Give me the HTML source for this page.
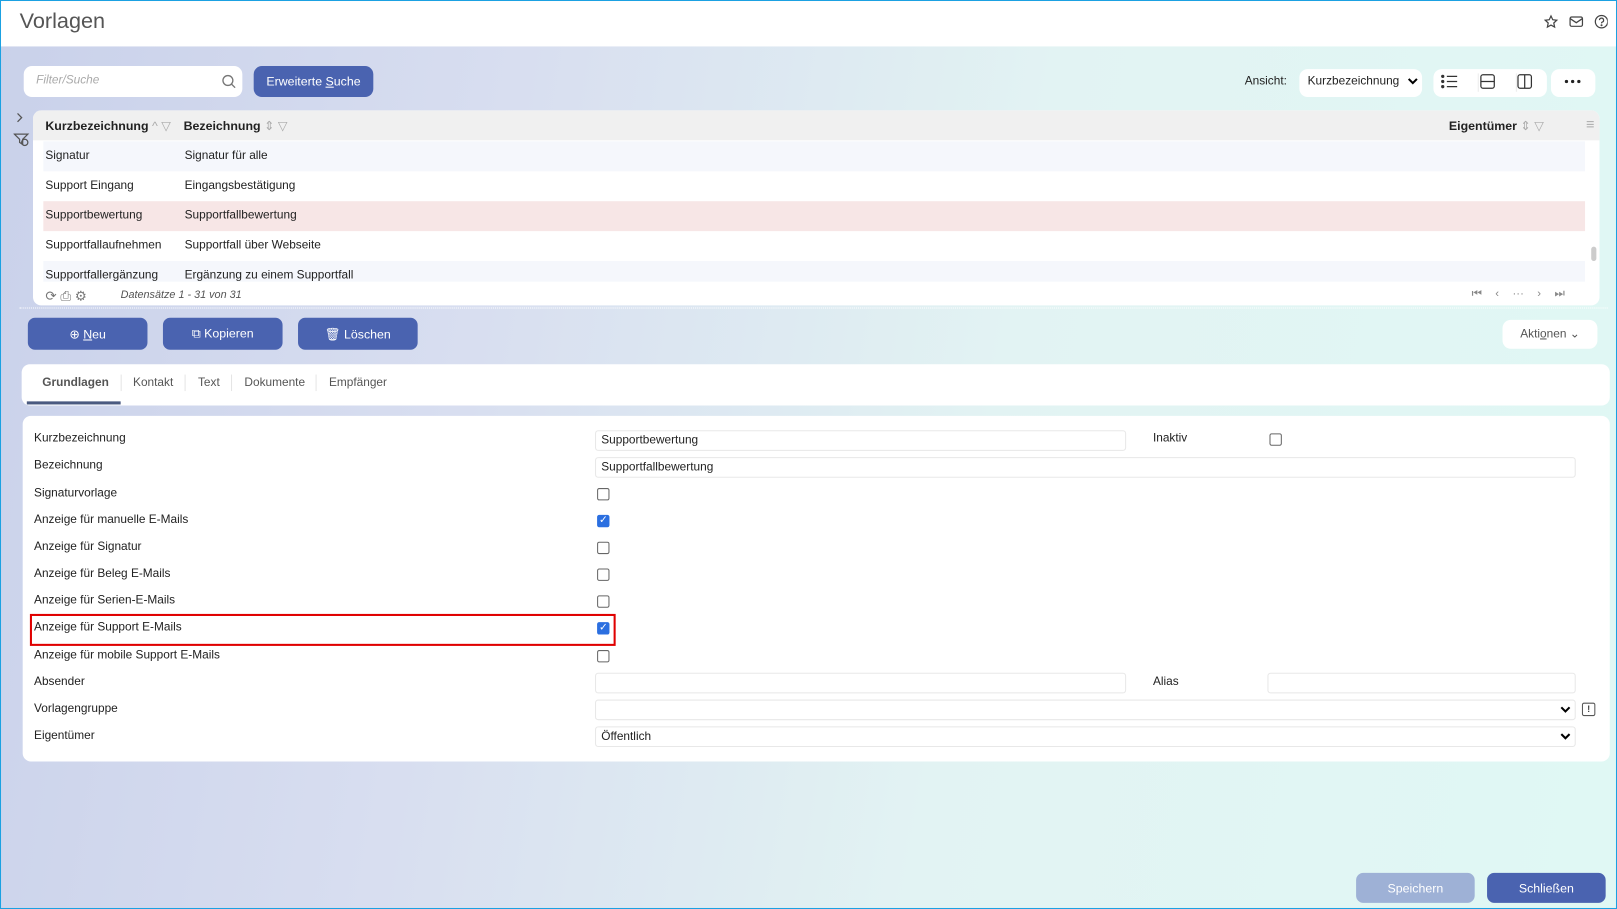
<!DOCTYPE html>
<html><head><meta charset="utf-8"><style>
*{box-sizing:border-box;margin:0;padding:0}
html,body{width:1617px;height:909px;overflow:hidden;background:#fff}
#w{position:absolute;left:0;top:0;width:1568px;height:881px;transform:scale(1.03125,1.0318);transform-origin:0 0;font-family:"Liberation Sans",sans-serif;font-size:11.5px;color:#222;
background:linear-gradient(100deg,#c9d1ea 0%,#d8def0 30%,#e2f3f3 60%,#e0f8f4 100%);border:1.5px solid #1ba1e2;overflow:hidden}
.a{position:absolute}
.top{left:0;top:0;width:100%;height:44px;background:#fff}
.card{background:#fff;border-radius:8px}
.btn{background:#4a63b0;color:#fff;border-radius:7px;display:flex;align-items:center;justify-content:center;font-size:12px}
.row{left:10px;width:1495px;height:29px;line-height:29px}
.row span{position:absolute}
.lbl{left:32px;font-size:11.5px}
.inp{border:1px solid #e8e8e8;border-radius:3px;height:20px;line-height:18px;padding-left:5px;font-size:11.5px;background:#fff}
.cb{width:12px;height:12px;border:1px solid #666;border-radius:2px;background:#fff}
.cbc{width:12px;height:12px;border-radius:2px;background:#2b6fe0;color:#fff;font-size:10px;line-height:12px;text-align:center}
.tab{top:364px;font-size:11.5px;color:#555}
</style></head><body><div id="w">
<div class="a top"></div>
<div class="a" style="left:18px;top:8px;font-size:21px;color:#555">Vorlagen</div>
<svg class="a" style="left:1496px;top:13px" width="62" height="16" fill="none" stroke="#444" stroke-width="1.2">
<path d="M7 1.5l1.7 3.6 3.9.5-2.9 2.7.8 3.9L7 10.3l-3.5 1.9.8-3.9L1.4 5.6l3.9-.5z"/>
<rect x="25.5" y="2.5" width="12" height="9" rx="1.5"/><path d="M25.5 4l6 4 6-4"/>
<circle cx="56" cy="7" r="6"/><path d="M54 5.5a2 2 0 1 1 2.5 2c-.4.2-.5.6-.5 1.2"/><circle cx="56" cy="10.5" r=".4" fill="#444"/></svg>

<div class="a card" style="left:22px;top:63px;width:212px;height:30px;border-radius:8px"></div>
<div class="a" style="left:34px;top:71px;color:#aaa;font-style:italic">Filter/Suche</div>
<svg class="a" style="left:214px;top:71px" width="14" height="14" fill="none" stroke="#777" stroke-width="1.3"><circle cx="6" cy="6" r="4.8"/><path d="M9.5 9.5l3.5 3.5"/></svg>
<div class="a btn" style="left:245px;top:63px;width:116px;height:30px;border-radius:8px">Erweiterte&nbsp;<u>S</u>uche</div>

<div class="a" style="left:1206px;top:72px">Ansicht:</div>
<div class="a card" style="left:1259px;top:66px;width:119px;height:27px"></div>
<div class="a" style="left:1267px;top:72px">Kurzbezeichnung</div>
<svg class="a" style="left:1364px;top:74px" width="10" height="8" fill="none" stroke="#000" stroke-width="2"><path d="M1 1.5l4 4 4-4"/></svg>
<div class="a card" style="left:1389px;top:66px;width:110px;height:27px"></div>
<svg class="a" style="left:1396px;top:70px" width="96" height="18" fill="none" stroke="#333" stroke-width="1.2">
<path d="M6 3h10M6 8h10M6 13h10"/><circle cx="2" cy="3" r="1" fill="#333"/><circle cx="2" cy="8" r="1" fill="#333"/><circle cx="2" cy="13" r="1" fill="#333"/>
<path d="M36.5 0v18M73.5 0v18" stroke="#eee"/>
<rect x="39" y="1.5" width="13" height="13" rx="2"/><path d="M39 8h13"/>
<rect x="75" y="1.5" width="13" height="13" rx="2"/><path d="M81.5 1.5v13"/></svg>
<div class="a card" style="left:1503px;top:66px;width:43px;height:27px"></div>
<svg class="a" style="left:1516px;top:76px" width="16" height="4" fill="#222"><circle cx="2" cy="2" r="1.6"/><circle cx="8" cy="2" r="1.6"/><circle cx="14" cy="2" r="1.6"/></svg>

<svg class="a" style="left:12px;top:107px" width="16" height="36" fill="none" stroke="#555" stroke-width="1.2"><path d="M4 2l4 4-4 4"/><path d="M1 22h13l-5 5v5l-3-2v-3z"/><circle cx="11" cy="30" r="3"/></svg>

<div class="a card" style="left:31px;top:106px;width:1519px;height:189px;overflow:hidden">
<div class="a" style="left:0;top:0;width:100%;height:29px;background:#f0f0f0"></div>
<div class="a" style="left:12px;top:8px;font-weight:bold;font-size:12px">Kurzbezeichnung <span style="color:#aaa;font-weight:normal">^ ▽</span></div>
<div class="a" style="left:146px;top:8px;font-weight:bold;font-size:12px">Bezeichnung <span style="color:#aaa;font-weight:normal">⇕ ▽</span></div>
<div class="a" style="left:1373px;top:8px;font-weight:bold;font-size:12px">Eigentümer <span style="color:#aaa;font-weight:normal">⇕ ▽</span></div>
<div class="a" style="left:1506px;top:5px;color:#aaa;font-size:14px">≡</div>
<div class="a row" style="top:30px;background:#f5f7fc"><span style="left:2px">Signatur</span><span style="left:137px">Signatur für alle</span></div>
<div class="a row" style="top:59px"><span style="left:2px">Support Eingang</span><span style="left:137px">Eingangsbestätigung</span></div>
<div class="a row" style="top:88px;background:#f7e6e6"><span style="left:2px">Supportbewertung</span><span style="left:137px">Supportfallbewertung</span></div>
<div class="a row" style="top:117px"><span style="left:2px">Supportfallaufnehmen</span><span style="left:137px">Supportfall über Webseite</span></div>
<div class="a row" style="top:146px;height:20px;background:#f5f7fc;overflow:hidden"><span style="left:2px">Supportfallergänzung</span><span style="left:137px">Ergänzung zu einem Supportfall</span></div>
<div class="a" style="left:1511px;top:132px;width:5px;height:14px;background:#ccc;border-radius:3px"></div>
<div class="a" style="left:12px;top:172px;color:#777;font-size:13px">⟳ ⎙ ⚙</div>
<div class="a" style="left:85px;top:173px;color:#555;font-style:italic;font-size:10.5px">Datensätze 1 - 31 von 31</div>
<div class="a" style="left:1395px;top:172px;color:#888;font-size:11px;word-spacing:10px">⏮ ‹ ··· › ⏭</div>
</div>
<div class="a" style="left:18px;top:297px;width:1540px;border-top:1px dotted #fff"></div>

<div class="a btn" style="left:26px;top:307px;width:116px;height:31px">⊕&nbsp;<u>N</u>eu</div>
<div class="a btn" style="left:157px;top:307px;width:116px;height:31px">⧉&nbsp;Kopieren</div>
<div class="a btn" style="left:288px;top:307px;width:116px;height:31px">🗑&nbsp;Löschen</div>
<div class="a card" style="left:1456px;top:309px;width:92px;height:28px;color:#555;text-align:center;line-height:28px">Akti<u>o</u>nen ⌄</div>

<div class="a card" style="left:20px;top:352px;width:1540px;height:40px"></div>
<div class="a tab" style="left:40px;font-weight:bold">Grundlagen</div>
<div class="a" style="left:25px;top:388px;width:91px;height:3px;background:#4a5a80"></div>
<div class="a tab" style="left:128px">Kontakt</div>
<div class="a tab" style="left:191px">Text</div>
<div class="a tab" style="left:236px">Dokumente</div>
<div class="a tab" style="left:318px">Empfänger</div>
<div class="a" style="left:116px;top:362px;height:16px;border-left:1px solid #e5e5e5"></div>
<div class="a" style="left:178px;top:362px;height:16px;border-left:1px solid #e5e5e5"></div>
<div class="a" style="left:223px;top:362px;height:16px;border-left:1px solid #e5e5e5"></div>
<div class="a" style="left:305px;top:362px;height:16px;border-left:1px solid #e5e5e5"></div>

<div class="a card" style="left:21px;top:402px;width:1539px;height:335px"></div>
<div class="a lbl" style="top:418px">Kurzbezeichnung</div>
<div class="a lbl" style="top:444px">Bezeichnung</div>
<div class="a lbl" style="top:471px">Signaturvorlage</div>
<div class="a lbl" style="top:497px">Anzeige für manuelle E-Mails</div>
<div class="a lbl" style="top:523px">Anzeige für Signatur</div>
<div class="a lbl" style="top:549px">Anzeige für Beleg E-Mails</div>
<div class="a lbl" style="top:575px">Anzeige für Serien-E-Mails</div>
<div class="a lbl" style="top:601px">Anzeige für Support E-Mails</div>
<div class="a lbl" style="top:628px">Anzeige für mobile Support E-Mails</div>
<div class="a lbl" style="top:654px">Absender</div>
<div class="a lbl" style="top:680px">Vorlagengruppe</div>
<div class="a lbl" style="top:706px">Eigentümer</div>

<div class="a inp" style="left:576px;top:416px;width:515px">Supportbewertung</div>
<div class="a" style="left:1117px;top:418px">Inaktiv</div>
<div class="a cb" style="left:1230px;top:419px"></div>
<div class="a inp" style="left:576px;top:442px;width:951px">Supportfallbewertung</div>
<div class="a cb" style="left:578px;top:472px"></div>
<div class="a cbc" style="left:578px;top:498px">✓</div>
<div class="a cb" style="left:578px;top:524px"></div>
<div class="a cb" style="left:578px;top:550px"></div>
<div class="a cb" style="left:578px;top:576px"></div>
<div class="a cbc" style="left:578px;top:602px">✓</div>
<div class="a cb" style="left:578px;top:629px"></div>
<div class="a" style="left:28px;top:594px;width:568px;height:31px;border:2px solid #e00000"></div>
<div class="a inp" style="left:576px;top:651px;width:515px"></div>
<div class="a" style="left:1117px;top:654px">Alias</div>
<div class="a inp" style="left:1228px;top:651px;width:299px"></div>
<div class="a inp" style="left:576px;top:677px;width:951px"></div>
<div class="a inp" style="left:576px;top:703px;width:951px">Öffentlich</div>
<svg class="a" style="left:1512px;top:683px" width="10" height="36" fill="none" stroke="#000" stroke-width="2"><path d="M1 1.5l4 4 4-4M1 27.5l4 4 4-4"/></svg>
<div class="a" style="left:1533px;top:680px;width:13px;height:13px;border:1.3px solid #555;border-radius:2px;font-size:9px;text-align:center;line-height:11px;font-weight:bold;color:#444">!</div>

<div class="a btn" style="left:1314px;top:845px;width:115px;height:29px;background:#9eb1d6">Speichern</div>
<div class="a btn" style="left:1441px;top:845px;width:115px;height:29px">Schließen</div>
</div></body></html>
